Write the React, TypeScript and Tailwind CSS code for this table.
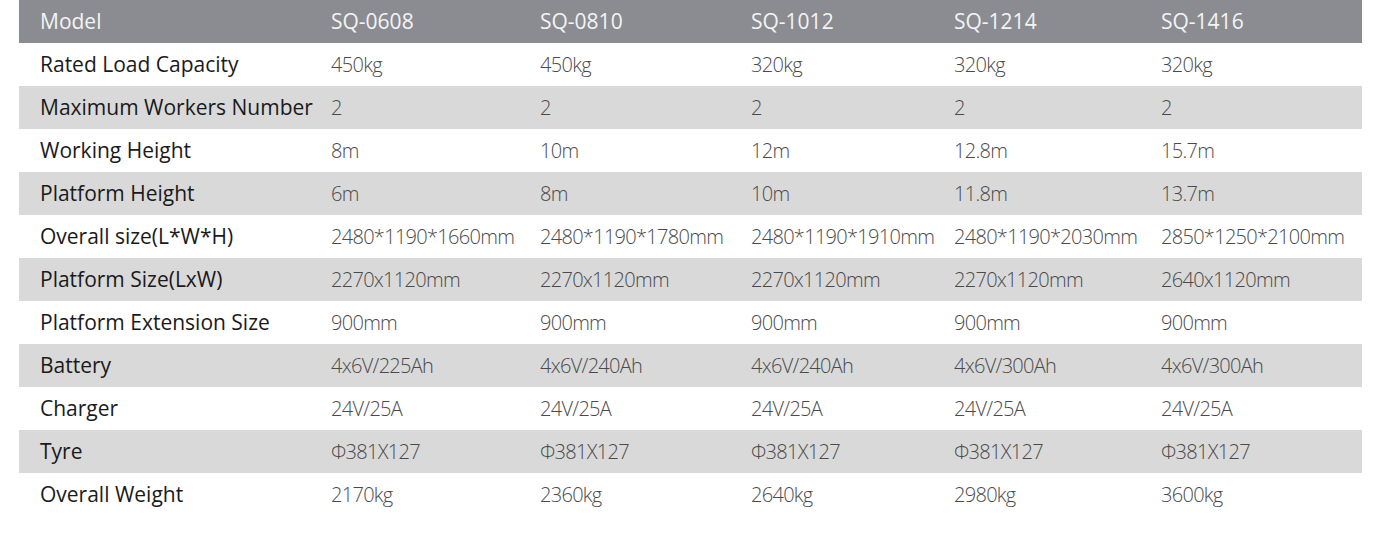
import React from "react";

const header = ["Model", "SQ-0608", "SQ-0810", "SQ-1012", "SQ-1214", "SQ-1416"];

const rows: string[][] = [
  ["Rated Load Capacity", "450kg", "450kg", "320kg", "320kg", "320kg"],
  ["Maximum Workers Number", "2", "2", "2", "2", "2"],
  ["Working Height", "8m", "10m", "12m", "12.8m", "15.7m"],
  ["Platform Height", "6m", "8m", "10m", "11.8m", "13.7m"],
  ["Overall size(L*W*H)", "2480*1190*1660mm", "2480*1190*1780mm", "2480*1190*1910mm", "2480*1190*2030mm", "2850*1250*2100mm"],
  ["Platform Size(LxW)", "2270x1120mm", "2270x1120mm", "2270x1120mm", "2270x1120mm", "2640x1120mm"],
  ["Platform Extension Size", "900mm", "900mm", "900mm", "900mm", "900mm"],
  ["Battery", "4x6V/225Ah", "4x6V/240Ah", "4x6V/240Ah", "4x6V/300Ah", "4x6V/300Ah"],
  ["Charger", "24V/25A", "24V/25A", "24V/25A", "24V/25A", "24V/25A"],
  ["Tyre", "Φ381X127", "Φ381X127", "Φ381X127", "Φ381X127", "Φ381X127"],
  ["Overall Weight", "2170kg", "2360kg", "2640kg", "2980kg", "3600kg"],
];

const grid = "grid grid-cols-[292px_209px_211px_203px_207px_221px]";

export default function App() {
  return (
    <div className="w-[1380px] h-[550px] bg-white pl-[19px] font-['Open_Sans',sans-serif]">
      <div className="w-[1343px]">
        <div className={`${grid} h-[43px] items-center bg-[#8a8c91] text-[#f4f4f4] text-[21px] font-normal`}>
          {header.map((h, i) => (
            <div key={i} className={i === 0 ? "pl-[21px]" : "pl-[20px]"}>
              {h}
            </div>
          ))}
        </div>
        {rows.map((r, ri) => (
          <div
            key={ri}
            className={`${grid} h-[43px] items-center ${ri % 2 === 1 ? "bg-[#d9d9d9]" : "bg-white"}`}
          >
            {r.map((c, ci) => (
              <div
                key={ci}
                className={
                  ci === 0
                    ? "pl-[21px] text-[21px] text-[#1a1a1a] whitespace-nowrap"
                    : "pl-[20px] text-[20px] tracking-[-0.7px] text-[#4a4a4a] font-light whitespace-nowrap"
                }
              >
                {c}
              </div>
            ))}
          </div>
        ))}
      </div>
    </div>
  );
}
